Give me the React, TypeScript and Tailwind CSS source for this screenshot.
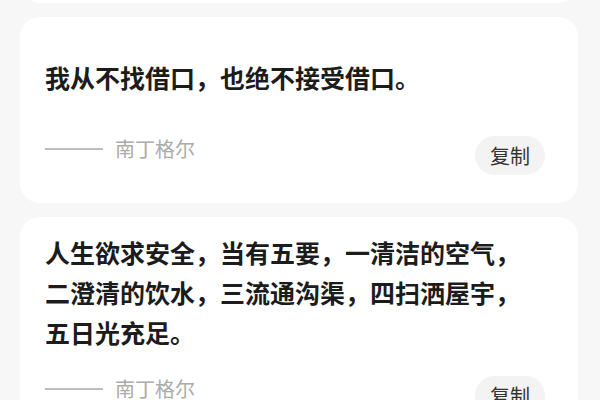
const quotes = [
  { text: '我从不找借口，也绝不接受借口。', author: '南丁格尔', h: 'h-[186px]', pt: 'pt-[40px]', mt: 'mt-[39px]' },
  {
    text: '人生欲求安全，当有五要，一清洁的空气，二澄清的饮水，三流通沟渠，四扫洒屋宇，五日光充足。',
    author: '南丁格尔',
    h: '',
    pt: 'pt-[15px]',
    mt: 'mt-[24px]',
  },
];

function QuoteCard({ q }: { q: (typeof quotes)[number] }) {
  return (
    <div className={`bg-white rounded-[20px] pl-[25px] pr-[33px] pb-[26px] ${q.pt} ${q.h}`}>
      <p className="w-[490px] text-[25px] leading-[40px] font-semibold text-[#1c1c1c]">{q.text}</p>
      <div className={`flex items-start justify-between ${q.mt}`}>
        <div className="mt-[1px] flex items-center h-[24px] gap-[12px]">
          <span className="block w-[58px] h-[2px] bg-[#bdbdbd]" />
          <span className="text-[20px] leading-[24px] text-[#ababab]">{q.author}</span>
        </div>
        <button className="w-[70px] h-[39px] rounded-full bg-[#f3f3f3] text-[20px] text-[#333] flex items-center justify-center">
          复制
        </button>
      </div>
    </div>
  );
}

export default function App() {
  return (
    <div
      className="w-[600px] h-[400px] overflow-hidden bg-[#f7f7f7]"
      style={{ fontFamily: '"Noto Sans CJK SC", "Noto Sans", sans-serif' }}
    >
      <div className="-mt-[183px] ml-[20px] mr-[22px] flex flex-col gap-[14px]">
        {/* previous card, scrolled mostly out of view */}
        <div className="bg-white rounded-[20px] h-[186px]" />
        {quotes.map((q, i) => (
          <QuoteCard key={i} q={q} />
        ))}
      </div>
    </div>
  );
}
